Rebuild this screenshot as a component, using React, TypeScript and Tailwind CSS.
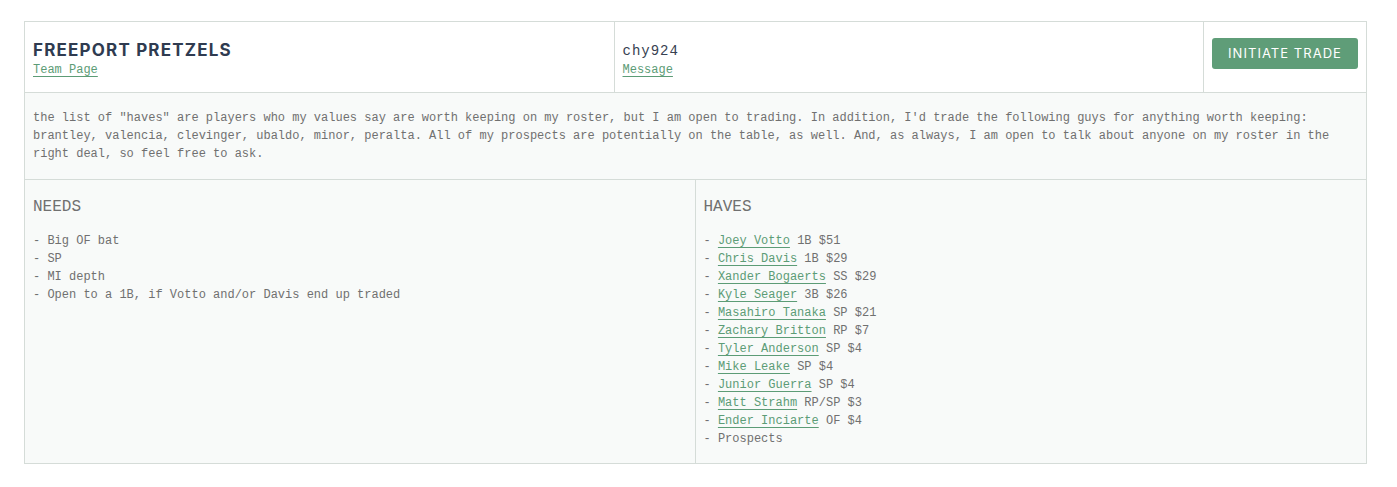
import React from 'react';

const mono = "font-['Liberation_Mono','DejaVu_Sans_Mono',monospace]";

const needs = ['Big OF bat', 'SP', 'MI depth', 'Open to a 1B, if Votto and/or Davis end up traded'];

const haves: { name: string; info: string }[] = [
  { name: 'Joey Votto', info: '1B $51' },
  { name: 'Chris Davis', info: '1B $29' },
  { name: 'Xander Bogaerts', info: 'SS $29' },
  { name: 'Kyle Seager', info: '3B $26' },
  { name: 'Masahiro Tanaka', info: 'SP $21' },
  { name: 'Zachary Britton', info: 'RP $7' },
  { name: 'Tyler Anderson', info: 'SP $4' },
  { name: 'Mike Leake', info: 'SP $4' },
  { name: 'Junior Guerra', info: 'SP $4' },
  { name: 'Matt Strahm', info: 'RP/SP $3' },
  { name: 'Ender Inciarte', info: 'OF $4' },
];

const linkCls = 'text-[#5c9c76] underline underline-offset-[3px] decoration-[#5c9c76]';

export default function App() {
  return (
    <div className="min-h-[487px] bg-white pt-[21px] pl-[24px]">
      <div className={`w-[1343px] border border-[#d5dcd8] ${mono}`}>
        {/* header row */}
        <div className="flex h-[71px] border-b border-[#d5dcd8] bg-white">
          <div className="flex-1 border-r border-[#d5dcd8] px-2 pt-[17px]">
            <div className="font-['Inter',sans-serif] text-[17px] font-bold leading-[22px] tracking-[0.07em] text-[#2f3b50]">
              FREEPORT PRETZELS
            </div>
            <a href="#" className={`block w-fit text-[12px] leading-[18px] ${linkCls}`}>
              Team Page
            </a>
          </div>
          <div className="flex-1 border-r border-[#d5dcd8] px-2 pt-[19px]">
            <div className="text-[14px] leading-[20px] tracking-[1px] text-[#374151]">chy924</div>
            <a href="#" className={`block w-fit text-[12px] leading-[18px] ${linkCls}`}>
              Message
            </a>
          </div>
          <div className="w-[162px] pl-2 pt-4">
            <button className="h-[31px] w-[146px] rounded-[3px] bg-[#5f9d78] font-['Inter',sans-serif] text-[13px] tracking-[0.08em] text-white">
              INITIATE TRADE
            </button>
          </div>
        </div>

        {/* description */}
        <div className="border-b border-[#d5dcd8] bg-[#f8faf9] px-2 py-4 text-[12px] leading-[18px] text-[#707070]">
          the list of "haves" are players who my values say are worth keeping on my roster, but I am open to trading. In
          addition, I'd trade the following guys for anything worth keeping: brantley, valencia, clevinger, ubaldo, minor,
          peralta. All of my prospects are potentially on the table, as well. And, as always, I am open to talk about
          anyone on my roster in the right deal, so feel free to ask.
        </div>

        {/* needs / haves */}
        <div className="grid grid-cols-2 bg-[#f8faf9] text-[#707070]">
          <div className="border-r border-[#d5dcd8] px-2 pt-[15px] pb-[15px]">
            <div className="mb-[13px] text-[16px] leading-[24px]">NEEDS</div>
            <ul className="text-[12px] leading-[18px]">
              {needs.map((n) => (
                <li key={n}>- {n}</li>
              ))}
            </ul>
          </div>
          <div className="px-2 pt-[15px] pb-[15px]">
            <div className="mb-[13px] text-[16px] leading-[24px]">HAVES</div>
            <ul className="text-[12px] leading-[18px]">
              {haves.map((h) => (
                <li key={h.name}>
                  -{' '}
                  <a href="#" className={linkCls}>
                    {h.name}
                  </a>{' '}
                  {h.info}
                </li>
              ))}
              <li>- Prospects</li>
            </ul>
          </div>
        </div>
      </div>
    </div>
  );
}
